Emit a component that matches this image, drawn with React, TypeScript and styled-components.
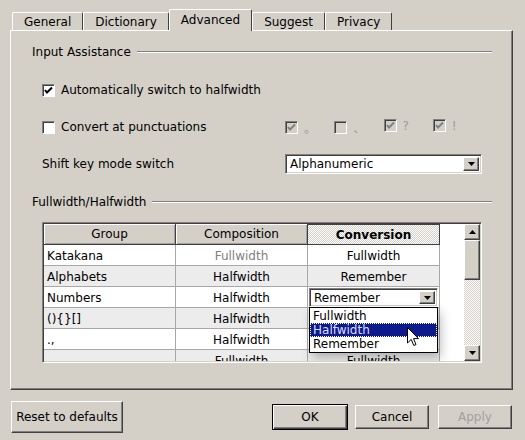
import React from "react";
import styled, { createGlobalStyle, css } from "styled-components";

const GlobalStyle = createGlobalStyle`
  html, body {
    margin: 0;
    padding: 0;
    background: #d4d0c8;
  }
  body {
    font-family: "DejaVu Sans", "Liberation Sans", "Noto Sans CJK JP", sans-serif;
    font-size: 12px;
    color: #000;
  }
  * {
    box-sizing: border-box;
  }
`;

const raised = css`
  background: #d4d0c8;
  border: 1px solid;
  border-color: #fff #404040 #404040 #fff;
  box-shadow: inset -1px -1px #808080;
`;

const sunken = css`
  border: 1px solid;
  border-color: #808080 #fff #fff #808080;
  box-shadow: inset 1px 1px #404040, inset -1px -1px #d4d0c8;
`;

const checker = css`
  background-color: #d4d0c8;
  background-image: repeating-conic-gradient(#fff 0% 25%, #d4d0c8 0% 50%);
  background-size: 2px 2px;
`;

const Dialog = styled.div`
  position: relative;
  width: 525px;
  height: 440px;
  overflow: hidden;
`;

const TabBar = styled.div`
  display: flex;
  align-items: flex-end;
  height: 30px;
  padding-left: 12px;
`;

const Tab = styled.div<{ $active?: boolean }>`
  position: relative;
  z-index: ${(p) => (p.$active ? 1 : 0)};
  display: flex;
  align-items: center;
  height: ${(p) => (p.$active ? 22 : 18)}px;
  margin-bottom: ${(p) => (p.$active ? -1 : 0)}px;
  padding: 1px 11px ${(p) => (p.$active ? 2 : 0)}px;
  background: #d4d0c8;
  border-top: 1px solid #fff;
  border-left: 1px solid #fff;
  border-right: 1px solid #404040;
  border-radius: 2px 2px 0 0;
`;

const Panel = styled.div`
  margin-left: 10px;
  width: 503px;
  height: 360px;
  border-top: 1px solid #fff;
  border-left: 1px solid #fff;
  border-right: 1px solid #404040;
  border-bottom: 1px solid #404040;
  box-shadow: inset -1px -1px #808080;
  padding: 13px 20px 0 21px;
`;

const GroupTitle = styled.div<{ $top?: number }>`
  display: flex;
  align-items: center;
  gap: 6px;
  height: 16px;
  margin-top: ${(p) => p.$top ?? 0}px;

  &::after {
    content: "";
    flex: 1;
    border-top: 1px solid #808080;
    border-bottom: 1px solid #fff;
  }
`;

const FormGrid = styled.div`
  display: grid;
  grid-template-columns: 243px 197px;
  grid-template-rows: 20px 20px 20px;
  row-gap: 17px;
  margin: 20px 0 0 10px;
  align-items: center;
`;

const CheckLabel = styled.label<{ $disabled?: boolean }>`
  display: flex;
  align-items: center;
  gap: 6px;
  color: ${(p) => (p.$disabled ? "#9a9a9a" : "#000")};
`;

const Box = styled.span<{ $disabled?: boolean }>`
  display: inline-flex;
  align-items: center;
  justify-content: center;
  width: 13px;
  height: 13px;
  background: ${(p) => (p.$disabled ? "#d4d0c8" : "#fff")};
  border: 1px solid;
  border-color: #808080 #fff #fff #808080;
  box-shadow: inset 1px 1px #404040;
`;

const PunctRow = styled.div`
  display: flex;
`;

const PunctItem = styled.div`
  width: 51px;
`;

const Combo = styled.div<{ $h: number }>`
  ${sunken};
  display: flex;
  align-items: center;
  height: ${(p) => p.$h}px;
  background: #fff;
  padding: 2px 2px 2px 4px;
`;

const ComboText = styled.span`
  flex: 1;
`;

const ArrowButton = styled.span`
  ${raised};
  display: inline-flex;
  align-items: center;
  justify-content: center;
  width: 16px;
  height: 100%;
`;

const TableFrame = styled.div`
  ${sunken};
  display: flex;
  width: 440px;
  height: 141px;
  margin: 12px 0 0 10px;
  padding: 1px;
`;

const Viewport = styled.div`
  position: relative;
  flex: 1;
  background: #fff;
  overflow: hidden;
`;

const TableRow = styled.div<{ $alt?: boolean }>`
  display: grid;
  grid-template-columns: 132px 132px 132px;
  height: 21px;
  background: ${(p) => (p.$alt ? "#ececec" : "#fff")};
  width: 396px;
`;

const HeadCell = styled.div<{ $sorted?: boolean }>`
  display: flex;
  align-items: center;
  justify-content: center;
  height: 21px;
  ${(p) =>
    p.$sorted
      ? css`
          ${checker};
          font-weight: bold;
          border-top: 1px solid #404040;
          border-bottom: 1px solid #404040;
          border-right: 1px solid #404040;
        `
      : css`
          background: #d4d0c8;
          border-right: 1px solid #404040;
          border-bottom: 1px solid #404040;
          box-shadow: inset 1px 1px #fff, inset -1px -1px #a0a0a0;
        `}
`;

const Cell = styled.div<{ $left?: boolean; $muted?: boolean }>`
  position: relative;
  display: flex;
  align-items: center;
  justify-content: ${(p) => (p.$left ? "flex-start" : "center")};
  padding: ${(p) => (p.$left ? "1px 3px 0" : "1px 0 0")};
  color: ${(p) => (p.$muted ? "#808080" : "#000")};
  border-right: 1px solid #a8a8a8;
  border-bottom: 1px solid #a8a8a8;
`;

const EditorCell = styled.div`
  position: relative;
  padding: 1px 1px 0 1px;
  border-right: 1px solid #a8a8a8;
  border-bottom: 1px solid #a8a8a8;
`;

const Popup = styled.div`
  position: absolute;
  z-index: 5;
  top: 20px;
  left: 1px;
  width: 129px;
  padding: 1px 0;
  background: #fff;
  border: 1px solid #000;
  box-shadow: 3px 5px 10px rgba(0, 0, 0, 0.25);
`;

const PopupItem = styled.div<{ $selected?: boolean }>`
  height: 14px;
  line-height: 14px;
  padding-left: 3px;
  background: ${(p) => (p.$selected ? "#0c1a8c" : "#fff")};
  color: ${(p) => (p.$selected ? "#dcdcff" : "#000")};
  outline: ${(p) => (p.$selected ? "1px dotted #fff" : "none")};
  outline-offset: -1px;
`;

const ScrollBar = styled.div`
  display: flex;
  flex-direction: column;
  width: 16px;
`;

const ScrollButton = styled.div`
  ${raised};
  display: flex;
  align-items: center;
  justify-content: center;
  height: 16px;
`;

const Thumb = styled.div`
  ${raised};
  height: 40px;
`;

const Track = styled.div`
  ${checker};
  flex: 1;
`;

const Footer = styled.div`
  display: flex;
  align-items: center;
  height: 50px;
  padding: 3px 13px 0 11px;
`;

const Button = styled.button<{ $w: number; $h: number; $default?: boolean; $gap?: number }>`
  width: ${(p) => p.$w}px;
  height: ${(p) => p.$h}px;
  margin-right: ${(p) => p.$gap ?? 0}px;
  padding: 0;
  font-family: inherit;
  font-size: 12px;
  color: #000;
  background: #d4d0c8;
  ${(p) =>
    p.$default
      ? css`
          border: 1px solid #000;
          box-shadow: inset 1px 1px #fff, inset -1px -1px #404040, inset -2px -2px #808080;
        `
      : raised}

  &:disabled {
    color: #a0a0a0;
  }
`;

const Spacer = styled.div`
  flex: 1;
`;

const Cursor = styled.svg`
  position: absolute;
  left: 407px;
  top: 327px;
  z-index: 10;
`;

const Check = ({ disabled }: { disabled?: boolean }) => (
  <svg width="9" height="9" viewBox="0 0 9 9">
    <polyline
      points="1,4 3,6.5 8,1.5"
      fill="none"
      stroke={disabled ? "#808080" : "#000"}
      strokeWidth="2"
    />
  </svg>
);

const CheckBox = ({
  checked,
  disabled,
  children,
}: {
  checked?: boolean;
  disabled?: boolean;
  children?: React.ReactNode;
}) => (
  <CheckLabel $disabled={disabled}>
    <Box $disabled={disabled}>{checked && <Check disabled={disabled} />}</Box>
    {children}
  </CheckLabel>
);

const Triangle = ({ up }: { up?: boolean }) => (
  <svg width="7" height="4" viewBox="0 0 7 4">
    <polygon points={up ? "0,4 7,4 3.5,0" : "0,0 7,0 3.5,4"} fill="#000" />
  </svg>
);

const rows = [
  { group: "Katakana", comp: "Fullwidth", conv: "Fullwidth", muted: true },
  { group: "Alphabets", comp: "Halfwidth", conv: "Remember" },
  { group: "Numbers", comp: "Halfwidth", conv: "", editor: true },
  { group: "(){}[]", comp: "Halfwidth", conv: "Halfwidth" },
  { group: ".,", comp: "Halfwidth", conv: "Halfwidth" },
  { group: "", comp: "Fullwidth", conv: "Fullwidth" },
];

const tabs = ["General", "Dictionary", "Advanced", "Suggest", "Privacy"];

export default function App() {
  return (
    <Dialog>
      <GlobalStyle />
      <TabBar>
        {tabs.map((t) => (
          <Tab key={t} $active={t === "Advanced"}>
            {t}
          </Tab>
        ))}
      </TabBar>
      <Panel>
        <GroupTitle>Input Assistance</GroupTitle>
        <FormGrid>
          <CheckBox checked>Automatically switch to halfwidth</CheckBox>
          <div />
          <CheckBox>Convert at punctuations</CheckBox>
          <PunctRow>
            <PunctItem>
              <CheckBox checked disabled>。</CheckBox>
            </PunctItem>
            <PunctItem>
              <CheckBox disabled>、</CheckBox>
            </PunctItem>
            <PunctItem>
              <CheckBox checked disabled>?</CheckBox>
            </PunctItem>
            <PunctItem>
              <CheckBox checked disabled>!</CheckBox>
            </PunctItem>
          </PunctRow>
          <span>Shift key mode switch</span>
          <Combo $h={20}>
            <ComboText>Alphanumeric</ComboText>
            <ArrowButton>
              <Triangle />
            </ArrowButton>
          </Combo>
        </FormGrid>
        <GroupTitle $top={20}>Fullwidth/Halfwidth</GroupTitle>
        <TableFrame>
          <Viewport>
            <TableRow>
              <HeadCell>Group</HeadCell>
              <HeadCell>Composition</HeadCell>
              <HeadCell $sorted>Conversion</HeadCell>
            </TableRow>
            {rows.map((r, i) => (
              <TableRow key={i} $alt={i % 2 === 1}>
                <Cell $left>{r.group}</Cell>
                <Cell $muted={r.muted}>{r.comp}</Cell>
                {r.editor ? (
                  <EditorCell>
                    <Combo $h={19}>
                      <ComboText>Remember</ComboText>
                      <ArrowButton>
                        <Triangle />
                      </ArrowButton>
                    </Combo>
                    <Popup>
                      <PopupItem>Fullwidth</PopupItem>
                      <PopupItem $selected>Halfwidth</PopupItem>
                      <PopupItem>Remember</PopupItem>
                    </Popup>
                  </EditorCell>
                ) : (
                  <Cell>{r.conv}</Cell>
                )}
              </TableRow>
            ))}
          </Viewport>
          <ScrollBar>
            <ScrollButton>
              <Triangle up />
            </ScrollButton>
            <Thumb />
            <Track />
            <ScrollButton>
              <Triangle />
            </ScrollButton>
          </ScrollBar>
        </TableFrame>
      </Panel>
      <Footer>
        <Button $w={112} $h={32}>Reset to defaults</Button>
        <Spacer />
        <Button $w={76} $h={26} $default $gap={7}>
          OK
        </Button>
        <Button $w={74} $h={24} $gap={9}>
          Cancel
        </Button>
        <Button $w={74} $h={24} disabled>
          Apply
        </Button>
      </Footer>
      <Cursor width="13" height="20" viewBox="0 0 13 20">
        <path
          d="M0.5,0.5 L0.5,16 L4.2,12.4 L6.8,18.5 L9,17.6 L6.5,11.6 L11.5,11.6 Z"
          fill="#fff"
          stroke="#000"
          strokeWidth="1"
        />
      </Cursor>
    </Dialog>
  );
}
